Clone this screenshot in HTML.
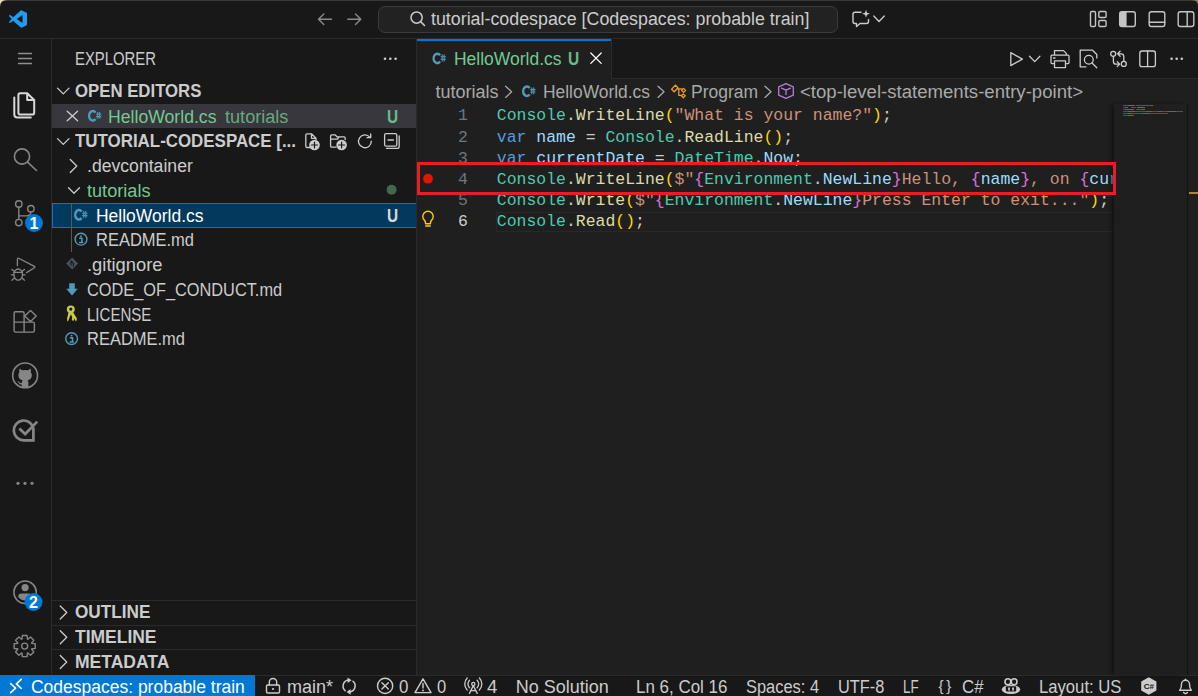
<!DOCTYPE html>
<html><head><meta charset="utf-8"><style>
html,body{margin:0;padding:0;}
body{width:1198px;height:696px;overflow:hidden;position:relative;background:#181818;font-family:"Liberation Sans",sans-serif;}
.t{position:absolute;white-space:pre;transform-origin:0 0;}
.r{position:absolute;}
.i{position:absolute;overflow:visible;}
.m{position:absolute;white-space:pre;font-family:"Liberation Mono",monospace;}
</style></head><body>
<div class="r" style="left:0px;top:0px;width:1198px;height:38px;background:#181818;"></div>
<div class="r" style="left:0px;top:0px;width:1198px;height:1px;background:#3a3832;"></div>
<div class="r" style="left:0px;top:38px;width:1198px;height:1px;background:#2b2b2b;"></div>
<div class="r" style="left:0px;top:39px;width:51px;height:636px;background:#181818;"></div>
<div class="r" style="left:51px;top:39px;width:1px;height:636px;background:#2b2b2b;"></div>
<div class="r" style="left:52px;top:39px;width:364px;height:636px;background:#181818;"></div>
<div class="r" style="left:416px;top:39px;width:1px;height:636px;background:#2b2b2b;"></div>
<div class="r" style="left:417px;top:39px;width:781px;height:636px;background:#1f1f1f;"></div>
<div class="r" style="left:611px;top:39px;width:587px;height:39px;background:#181818;"></div>
<div class="r" style="left:611px;top:78px;width:587px;height:1px;background:#2b2b2b;"></div>
<div class="r" style="left:611px;top:39px;width:1px;height:39px;background:#2b2b2b;"></div>
<div class="r" style="left:0px;top:674.6px;width:1198px;height:22px;background:#181818;"></div>
<div class="r" style="left:0px;top:674.6px;width:1198px;height:1px;background:#2b2b2b;"></div>
<div class="t" style="left:75.30px;top:49.76px;font-size:18px;line-height:18px;color:#cccccc;transform:scaleX(0.8262);">EXPLORER</div>
<div class="t" style="left:75.30px;top:81.76px;font-size:18px;line-height:18px;color:#cccccc;font-weight:bold;transform:scaleX(0.9315);">OPEN EDITORS</div>
<div class="r" style="left:52px;top:104px;width:364px;height:24px;background:#37373d;"></div>
<div class="t" style="left:108.00px;top:107.56px;font-size:18px;line-height:18px;color:#73c991;transform:scaleX(0.9801);">HelloWorld.cs</div>
<div class="t" style="left:225.00px;top:107.56px;font-size:18px;line-height:18px;color:#6aa780;transform:scaleX(1.0059);">tutorials</div>
<div class="t" style="left:386.50px;top:107.56px;font-size:18px;line-height:18px;color:#6db88a;font-weight:bold;transform:scaleX(0.8539);">U</div>
<div class="t" style="left:75.00px;top:131.76px;font-size:18px;line-height:18px;color:#cccccc;font-weight:bold;transform:scaleX(0.9391);">TUTORIAL-CODESPACE [...</div>
<div class="t" style="left:86.50px;top:157.01px;font-size:18px;line-height:18px;color:#cccccc;transform:scaleX(0.9790);">.devcontainer</div>
<div class="t" style="left:86.50px;top:181.76px;font-size:18px;line-height:18px;color:#73c991;transform:scaleX(1.0075);">tutorials</div>
<div class="r" style="left:52px;top:203px;width:364px;height:24.75px;background:#04395e;box-sizing:border-box;border:1px solid #0078d4;border-right:none;"></div>
<div class="t" style="left:96.00px;top:206.51px;font-size:18px;line-height:18px;color:#ffffff;transform:scaleX(0.9711);">HelloWorld.cs</div>
<div class="t" style="left:386.50px;top:206.51px;font-size:18px;line-height:18px;color:#d8d8d8;font-weight:bold;transform:scaleX(0.8539);">U</div>
<div class="t" style="left:96.00px;top:231.26px;font-size:18px;line-height:18px;color:#cccccc;transform:scaleX(0.9157);">README.md</div>
<div class="t" style="left:86.50px;top:256.01px;font-size:18px;line-height:18px;color:#cccccc;transform:scaleX(1.0196);">.gitignore</div>
<div class="t" style="left:86.50px;top:280.76px;font-size:18px;line-height:18px;color:#cccccc;transform:scaleX(0.9073);">CODE_OF_CONDUCT.md</div>
<div class="t" style="left:86.90px;top:305.51px;font-size:18px;line-height:18px;color:#cccccc;transform:scaleX(0.8348);">LICENSE</div>
<div class="t" style="left:86.50px;top:330.26px;font-size:18px;line-height:18px;color:#cccccc;transform:scaleX(0.9157);">README.md</div>
<div class="r" style="left:52px;top:600px;width:364px;height:1px;background:#2b2b2b;"></div>
<div class="r" style="left:52px;top:624.7px;width:364px;height:1px;background:#2b2b2b;"></div>
<div class="r" style="left:52px;top:649.4px;width:364px;height:1px;background:#2b2b2b;"></div>
<div class="t" style="left:74.80px;top:603.36px;font-size:18px;line-height:18px;color:#cccccc;font-weight:bold;transform:scaleX(0.9545);">OUTLINE</div>
<div class="t" style="left:74.80px;top:628.36px;font-size:18px;line-height:18px;color:#cccccc;font-weight:bold;transform:scaleX(0.9703);">TIMELINE</div>
<div class="t" style="left:74.80px;top:653.16px;font-size:18px;line-height:18px;color:#cccccc;font-weight:bold;transform:scaleX(0.9734);">METADATA</div>
<div class="r" style="left:378px;top:6px;width:460px;height:26.5px;background:#222222;box-sizing:border-box;border:1px solid #3b3b3b;border-radius:7px;"></div>
<div class="t" style="left:430.60px;top:10.36px;font-size:18px;line-height:18px;color:#cccccc;transform:scaleX(0.9900);">tutorial-codespace [Codespaces: probable train]</div>
<div class="r" style="left:417px;top:39px;width:194px;height:2px;background:#0078d4;"></div>
<div class="t" style="left:453.50px;top:50.16px;font-size:18px;line-height:18px;color:#73c991;transform:scaleX(0.9711);">HelloWorld.cs</div>
<div class="t" style="left:567.80px;top:50.16px;font-size:18px;line-height:18px;color:#6db88a;font-weight:bold;transform:scaleX(0.8616);">U</div>
<div class="t" style="left:435.40px;top:82.86px;font-size:18px;line-height:18px;color:#a9a9a9;">tutorials</div>
<div class="t" style="left:543.00px;top:82.86px;font-size:18px;line-height:18px;color:#a9a9a9;transform:scaleX(0.9666);">HelloWorld.cs</div>
<div class="t" style="left:691.00px;top:82.86px;font-size:18px;line-height:18px;color:#a9a9a9;transform:scaleX(0.9707);">Program</div>
<div class="t" style="left:800.00px;top:82.86px;font-size:18px;line-height:18px;color:#a9a9a9;transform:scaleX(1.0323);">&lt;top-level-statements-entry-point&gt;</div>
<div class="r" style="left:0px;top:674.6px;width:255px;height:22px;background:#0078d4;"></div>
<div class="t" style="left:30.60px;top:677.66px;font-size:18px;line-height:18px;color:#ffffff;transform:scaleX(0.9712);">Codespaces: probable train</div>
<div class="t" style="left:287.00px;top:677.66px;font-size:18px;line-height:18px;color:#cccccc;">main*</div>
<div class="t" style="left:399.30px;top:677.66px;font-size:18px;line-height:18px;color:#cccccc;transform:scaleX(0.9390);">0</div>
<div class="t" style="left:436.80px;top:677.66px;font-size:18px;line-height:18px;color:#cccccc;transform:scaleX(0.9190);">0</div>
<div class="t" style="left:487.00px;top:677.66px;font-size:18px;line-height:18px;color:#cccccc;transform:scaleX(1.0388);">4</div>
<div class="t" style="left:515.70px;top:677.66px;font-size:18px;line-height:18px;color:#cccccc;">No Solution</div>
<div class="t" style="left:635.70px;top:677.66px;font-size:18px;line-height:18px;color:#cccccc;transform:scaleX(0.9416);">Ln 6, Col 16</div>
<div class="t" style="left:745.80px;top:677.66px;font-size:18px;line-height:18px;color:#cccccc;transform:scaleX(0.9131);">Spaces: 4</div>
<div class="t" style="left:837.70px;top:677.66px;font-size:18px;line-height:18px;color:#cccccc;transform:scaleX(0.9079);">UTF-8</div>
<div class="t" style="left:902.80px;top:677.66px;font-size:18px;line-height:18px;color:#cccccc;transform:scaleX(0.7474);">LF</div>
<div class="t" style="left:962.30px;top:677.66px;font-size:18px;line-height:18px;color:#cccccc;transform:scaleX(0.9344);">C#</div>
<div class="t" style="left:1038.60px;top:677.66px;font-size:18px;line-height:18px;color:#cccccc;transform:scaleX(0.9253);">Layout: US</div>
<div class="r" style="left:70.5px;top:203px;width:1px;height:49px;background:#585858;"></div>
<div class="r" style="left:496px;top:211.5px;width:618px;height:20.5px;background:transparent;box-sizing:border-box;border:1.5px solid #282828;"></div>
<div class="m" style="left:457.92px;top:108.36px;font-size:16.467px;line-height:16.467px;color:#6e7681">1</div>
<div class="m" style="left:457.92px;top:129.58px;font-size:16.467px;line-height:16.467px;color:#6e7681">2</div>
<div class="m" style="left:457.92px;top:150.80px;font-size:16.467px;line-height:16.467px;color:#6e7681">3</div>
<div class="m" style="left:457.92px;top:172.02px;font-size:16.467px;line-height:16.467px;color:#6e7681">4</div>
<div class="m" style="left:457.92px;top:193.24px;font-size:16.467px;line-height:16.467px;color:#6e7681">5</div>
<div class="m" style="left:457.92px;top:214.46px;font-size:16.467px;line-height:16.467px;color:#cccccc">6</div>
<div style="position:absolute;left:417px;top:104px;width:697px;height:570px;overflow:hidden"><div class="m" style="left:79.8px;top:-104px;margin-top:108.36px;font-size:16.467px;line-height:16.467px"><span style="color:#4ec9b0">Console</span><span style="color:#cccccc">.</span><span style="color:#dcdcaa">WriteLine</span><span style="color:#ffd700">(</span><span style="color:#ce9178">&quot;What is your name?&quot;</span><span style="color:#ffd700">)</span><span style="color:#cccccc">;</span></div><div class="m" style="left:79.8px;top:-104px;margin-top:129.58px;font-size:16.467px;line-height:16.467px"><span style="color:#569cd6">var</span><span style="color:#cccccc"> </span><span style="color:#9cdcfe">name</span><span style="color:#cccccc"> = </span><span style="color:#4ec9b0">Console</span><span style="color:#cccccc">.</span><span style="color:#dcdcaa">ReadLine</span><span style="color:#ffd700">()</span><span style="color:#cccccc">;</span></div><div class="m" style="left:79.8px;top:-104px;margin-top:150.80px;font-size:16.467px;line-height:16.467px"><span style="color:#569cd6">var</span><span style="color:#cccccc"> </span><span style="color:#9cdcfe">currentDate</span><span style="color:#cccccc"> = </span><span style="color:#4ec9b0">DateTime</span><span style="color:#cccccc">.</span><span style="color:#9cdcfe">Now</span><span style="color:#cccccc">;</span></div><div class="m" style="left:79.8px;top:-104px;margin-top:172.02px;font-size:16.467px;line-height:16.467px"><span style="color:#4ec9b0">Console</span><span style="color:#cccccc">.</span><span style="color:#dcdcaa">WriteLine</span><span style="color:#ffd700">(</span><span style="color:#ce9178">$&quot;</span><span style="color:#da70d6">{</span><span style="color:#4ec9b0">Environment</span><span style="color:#cccccc">.</span><span style="color:#9cdcfe">NewLine</span><span style="color:#da70d6">}</span><span style="color:#ce9178">Hello, </span><span style="color:#da70d6">{</span><span style="color:#9cdcfe">name</span><span style="color:#da70d6">}</span><span style="color:#ce9178">, on </span><span style="color:#da70d6">{</span><span style="color:#9cdcfe">currentDate</span><span style="color:#ce9178">:d</span><span style="color:#da70d6">}</span><span style="color:#ce9178"> at </span><span style="color:#da70d6">{</span><span style="color:#9cdcfe">currentDate</span><span style="color:#ce9178">:t</span><span style="color:#da70d6">}</span><span style="color:#ce9178">!&quot;</span><span style="color:#ffd700">)</span><span style="color:#cccccc">;</span></div><div class="m" style="left:79.8px;top:-104px;margin-top:193.24px;font-size:16.467px;line-height:16.467px"><span style="color:#4ec9b0">Console</span><span style="color:#cccccc">.</span><span style="color:#dcdcaa">Write</span><span style="color:#ffd700">(</span><span style="color:#ce9178">$&quot;</span><span style="color:#da70d6">{</span><span style="color:#4ec9b0">Environment</span><span style="color:#cccccc">.</span><span style="color:#9cdcfe">NewLine</span><span style="color:#da70d6">}</span><span style="color:#ce9178">Press Enter to exit...</span><span style="color:#ce9178">&quot;</span><span style="color:#ffd700">)</span><span style="color:#cccccc">;</span></div><div class="m" style="left:79.8px;top:-104px;margin-top:214.46px;font-size:16.467px;line-height:16.467px"><span style="color:#4ec9b0">Console</span><span style="color:#cccccc">.</span><span style="color:#dcdcaa">Read</span><span style="color:#ffd700">()</span><span style="color:#cccccc">;</span></div></div>
<div class="r" style="left:1114px;top:104px;width:74px;height:570.6px;background:#1f1f1f;box-shadow:-3px 0 4px -1px #101010;"></div>
<div class="r" style="left:1187px;top:104px;width:1.2px;height:570.6px;background:#131313;"></div>
<div class="r" style="left:1187px;top:104px;width:11px;height:1px;background:#131313;"></div>
<div class="r" style="left:1188.5px;top:104px;width:9.5px;height:570.6px;background:#1f1f1f;"></div>
<div class="r" style="left:1188.5px;top:192px;width:9.5px;height:2px;background:#b5822f;"></div>
<div class="r" style="left:1122.5px;top:104.5px;width:5.18px;height:1.3px;background:#4ec9b0;opacity:0.4;"></div>
<div class="r" style="left:1128.42px;top:104.5px;width:6.66px;height:1.3px;background:#dcdcaa;opacity:0.4;"></div>
<div class="r" style="left:1135.82px;top:104.5px;width:14.8px;height:1.3px;background:#ce9178;opacity:0.4;"></div>
<div class="r" style="left:1150.62px;top:104.5px;width:2.22px;height:1.3px;background:#ffd700;opacity:0.4;"></div>
<div class="r" style="left:1122.5px;top:106.5px;width:2.22px;height:1.3px;background:#569cd6;opacity:0.4;"></div>
<div class="r" style="left:1125.46px;top:106.5px;width:2.96px;height:1.3px;background:#9cdcfe;opacity:0.4;"></div>
<div class="r" style="left:1130.64px;top:106.5px;width:5.18px;height:1.3px;background:#4ec9b0;opacity:0.4;"></div>
<div class="r" style="left:1136.56px;top:106.5px;width:5.92px;height:1.3px;background:#dcdcaa;opacity:0.4;"></div>
<div class="r" style="left:1142.48px;top:106.5px;width:2.22px;height:1.3px;background:#ffd700;opacity:0.4;"></div>
<div class="r" style="left:1122.5px;top:108.5px;width:2.22px;height:1.3px;background:#569cd6;opacity:0.4;"></div>
<div class="r" style="left:1125.46px;top:108.5px;width:8.14px;height:1.3px;background:#9cdcfe;opacity:0.4;"></div>
<div class="r" style="left:1135.82px;top:108.5px;width:5.92px;height:1.3px;background:#4ec9b0;opacity:0.4;"></div>
<div class="r" style="left:1142.48px;top:108.5px;width:2.22px;height:1.3px;background:#9cdcfe;opacity:0.4;"></div>
<div class="r" style="left:1122.5px;top:110.5px;width:5.18px;height:1.3px;background:#4ec9b0;opacity:0.4;"></div>
<div class="r" style="left:1128.42px;top:110.5px;width:6.66px;height:1.3px;background:#dcdcaa;opacity:0.4;"></div>
<div class="r" style="left:1135.08px;top:110.5px;width:2.22px;height:1.3px;background:#ce9178;opacity:0.4;"></div>
<div class="r" style="left:1137.3px;top:110.5px;width:8.88px;height:1.3px;background:#4ec9b0;opacity:0.4;"></div>
<div class="r" style="left:1146.18px;top:110.5px;width:5.92px;height:1.3px;background:#9cdcfe;opacity:0.4;"></div>
<div class="r" style="left:1152.1px;top:110.5px;width:5.92px;height:1.3px;background:#ce9178;opacity:0.4;"></div>
<div class="r" style="left:1158.02px;top:110.5px;width:4.44px;height:1.3px;background:#9cdcfe;opacity:0.4;"></div>
<div class="r" style="left:1162.46px;top:110.5px;width:4.44px;height:1.3px;background:#ce9178;opacity:0.4;"></div>
<div class="r" style="left:1166.9px;top:110.5px;width:8.88px;height:1.3px;background:#9cdcfe;opacity:0.4;"></div>
<div class="r" style="left:1175.78px;top:110.5px;width:7.4px;height:1.3px;background:#ce9178;opacity:0.4;"></div>
<div class="r" style="left:1122.5px;top:112.5px;width:5.18px;height:1.3px;background:#4ec9b0;opacity:0.4;"></div>
<div class="r" style="left:1128.42px;top:112.5px;width:3.7px;height:1.3px;background:#dcdcaa;opacity:0.4;"></div>
<div class="r" style="left:1132.12px;top:112.5px;width:2.22px;height:1.3px;background:#ce9178;opacity:0.4;"></div>
<div class="r" style="left:1134.34px;top:112.5px;width:8.88px;height:1.3px;background:#4ec9b0;opacity:0.4;"></div>
<div class="r" style="left:1143.22px;top:112.5px;width:5.92px;height:1.3px;background:#9cdcfe;opacity:0.4;"></div>
<div class="r" style="left:1149.14px;top:112.5px;width:19.24px;height:1.3px;background:#ce9178;opacity:0.4;"></div>
<div class="r" style="left:1122.5px;top:114.5px;width:5.18px;height:1.3px;background:#4ec9b0;opacity:0.4;"></div>
<div class="r" style="left:1128.42px;top:114.5px;width:2.96px;height:1.3px;background:#dcdcaa;opacity:0.4;"></div>
<div class="r" style="left:1131.38px;top:114.5px;width:2.22px;height:1.3px;background:#ffd700;opacity:0.4;"></div>
<div class="r" style="left:417px;top:162px;width:699px;height:33px;background:transparent;box-sizing:border-box;border:3px solid #ec1c24;"></div>
<div class="t" style="left:938.6px;top:677.5px;font-size:15px;line-height:15px;color:#cccccc;letter-spacing:2.6px">{}</div>
<svg style="position:absolute;left:0;top:0" width="1198" height="696" viewBox="0 0 1198 696"><g transform="translate(9,10) scale(0.18)"><path fill="#1f9cf0" fill-rule="evenodd" d="M70.9 2.3 L96 14.2 C98.4 15.3 100 17.8 100 20.4 V79.6 C100 82.3 98.5 84.7 96 85.8 L70.9 97.7 C69 98.6 66.8 98.5 65 97.4 L23.4 59.6 L8.2 71.1 C6.6 72.3 4.3 72.2 2.8 70.9 L0.9 69.1 C-0.3 68 -0.3 66.1 0.9 65 L14.8 50 L0.9 35 C-0.3 33.9 -0.3 32 0.9 30.9 L2.8 29.1 C4.3 27.7 6.6 27.6 8.2 28.9 L23.4 40.4 L65 2.6 C66.8 1.5 69 1.4 70.9 2.3 Z M75 27.3 L43.4 50 L75 72.7 Z"/></g><g stroke="#8f8f8f" stroke-width="1.3" fill="none" stroke-linecap="round" stroke-linejoin="round"><path d="M18.5 53.5 H31.5 M18.5 58.5 H31.5 M18.5 63.5 H31.5"/></g><g stroke="#d7d7d7" stroke-width="2.0" fill="none" stroke-linecap="round" stroke-linejoin="round"><path d="M18.4 95 Q18.4 93.2 20.2 93.2 H27.2 L34.2 100 V112.7 Q34.2 114.5 32.4 114.5 H20.2 Q18.4 114.5 18.4 112.7 Z M27.2 93.2 V100 H34.2"/><path d="M14.3 97.5 V114.5 Q14.3 117.6 17.4 117.6 H30.8"/></g><g stroke="#868686" stroke-width="1.6" fill="none" stroke-linecap="round" stroke-linejoin="round"><circle cx="22" cy="156.5" r="7.6"/><path d="M27.6 162.2 L36.5 170.5"/></g><g stroke="#868686" stroke-width="1.4" fill="none" stroke-linecap="round" stroke-linejoin="round"><circle cx="18.8" cy="204" r="3.2"/><circle cx="30.9" cy="208.7" r="3.2"/><circle cx="18.8" cy="222.6" r="3.2"/><path d="M18.8 207.2 V219.4 M30.9 211.9 Q30.9 215.9 26 215.9 H18.8"/></g><circle cx="34" cy="223" r="9" fill="#0078d4"/><g stroke="#868686" stroke-width="1.3" fill="none" stroke-linecap="round" stroke-linejoin="round"><path d="M17.4 265.5 V259.5 Q17.4 257.6 19.2 258.5 L34.4 266.4 Q35.3 267 34.4 267.7 L26.5 272.6"/><ellipse cx="18.2" cy="274.6" rx="4.3" ry="5.6"/><path d="M13.9 272.4 H22.5 M11.9 269.4 L14 271.1 M24.5 269.4 L22.4 271.1 M11.4 274.8 H13.9 M22.5 274.8 H25 M11.9 280.2 L14.1 278.3 M24.5 280.2 L22.3 278.3"/></g><g stroke="#868686" stroke-width="1.4" fill="none" stroke-linecap="round" stroke-linejoin="round"><path d="M24.1 332.1 H15.6 Q14.1 332.1 14.1 330.6 V313.3 Q14.1 311.8 15.6 311.8 H22.6 Q24.1 311.8 24.1 313.3 V332.1 M14.1 322.1 H32.9 Q34.4 322.1 34.4 323.6 V330.6 Q34.4 332.1 32.9 332.1 H24.1" /><path d="M30.5 310.4 L36.2 316 L30.5 321.6 L24.8 316 Z" stroke-linejoin="round"/></g><g stroke="#868686" stroke-width="1.6" fill="none" stroke-linecap="round" stroke-linejoin="round"><circle cx="25.1" cy="375.4" r="12.4"/></g><path fill="#868686" d="M19.8 368.5 L22 370.3 Q25.1 369.6 28.2 370.3 L30.4 368.5 Q31.4 370.6 30.8 372.2 Q32 373.6 31.8 375.8 Q31.5 379.7 27.6 380.3 Q28.4 381.2 28.4 382.6 V387.5 Q25.1 388.2 21.8 387.5 V384.6 Q19.4 384.9 18.4 382.6 Q18 381.5 17.2 381.2 Q18.6 380.9 19.6 382.4 Q20.6 383.3 21.8 382.8 Q21.9 381 22.6 380.3 Q18.7 379.7 18.4 375.8 Q18.2 373.6 19.4 372.2 Q18.8 370.6 19.8 368.5 Z"/><path fill="none" stroke="#868686" stroke-width="2.7" stroke-linejoin="miter" d="M33.4 428.4 A9.9 9.9 0 1 0 23.6 440.3 H33.4 Z"/><path fill="none" stroke="#868686" stroke-width="2.7" d="M19.3 428.4 L25.2 434 L37.2 421.6"/><circle cx="18" cy="483.3" r="1.6" fill="#868686"/><circle cx="25" cy="483.3" r="1.6" fill="#868686"/><circle cx="32" cy="483.3" r="1.6" fill="#868686"/><g stroke="#868686" stroke-width="1.5" fill="none" stroke-linecap="round" stroke-linejoin="round"><circle cx="25.1" cy="592.3" r="11.2"/></g><circle cx="25.1" cy="587.6" r="3.6" fill="#868686"/><path fill="#868686" d="M18.2 597 Q18.2 593.6 21.4 593.6 H28.8 Q32 593.6 32 597 Q28.8 600.6 25.1 600.6 Q21.4 600.6 18.2 597 Z"/><circle cx="33.5" cy="602" r="9" fill="#0078d4"/><g stroke="#868686" stroke-width="1.4" fill="none" stroke-linecap="round" stroke-linejoin="round"><path d="M35.24 643.74 L35.24 648.46 L31.81 648.78 L31.62 649.24 L33.82 651.89 L30.49 655.22 L27.84 653.02 L27.38 653.21 L27.06 656.64 L22.34 656.64 L22.02 653.21 L21.56 653.02 L18.91 655.22 L15.58 651.89 L17.78 649.24 L17.59 648.78 L14.16 648.46 L14.16 643.74 L17.59 643.42 L17.78 642.96 L15.58 640.31 L18.91 636.98 L21.56 639.18 L22.02 638.99 L22.34 635.56 L27.06 635.56 L27.38 638.99 L27.84 639.18 L30.49 636.98 L33.82 640.31 L31.62 642.96 L31.81 643.42 Z"/><circle cx="24.7" cy="646.1" r="3"/></g><text x="34" y="229.2" font-family="Liberation Sans" font-weight="bold" font-size="16" fill="#fff" text-anchor="middle">1</text><text x="33.5" y="608.2" font-family="Liberation Sans" font-weight="bold" font-size="16" fill="#fff" text-anchor="middle">2</text><g stroke="#8a8a8a" stroke-width="1.4" fill="none" stroke-linecap="round" stroke-linejoin="round"><path d="M318.5 19.2 H331.5 M323.8 13.9 L318.5 19.2 L323.8 24.5"/></g><g stroke="#8a8a8a" stroke-width="1.4" fill="none" stroke-linecap="round" stroke-linejoin="round"><path d="M347.8 19.2 H360.8 M355.5 13.9 L360.8 19.2 L355.5 24.5"/></g><g stroke="#cccccc" stroke-width="1.5" fill="none" stroke-linecap="round" stroke-linejoin="round"><circle cx="416.6" cy="17.6" r="5.6"/><path d="M420.6 21.6 L424.5 25.5"/></g><g stroke="#cccccc" stroke-width="1.4" fill="none" stroke-linecap="round" stroke-linejoin="round"><path d="M861 12.2 H855 Q853 12.2 853 14.2 V21.5 Q853 23.5 855 23.5 H856.5 V26.5 L860 23.5 H866.5 Q868.5 23.5 868.5 21.5 V19.5"/></g><path fill="#cccccc" d="M866 9.8 L867 12.8 L870 13.8 L867 14.8 L866 17.8 L865 14.8 L862 13.8 L865 12.8 Z"/><g stroke="#cccccc" stroke-width="1.3" fill="none" stroke-linecap="round" stroke-linejoin="round"><path d="M873.8 16 L879 21.5 L884.3 16"/></g><g stroke="#c5c5c5" stroke-width="1.4" fill="none" stroke-linecap="round" stroke-linejoin="round"><rect x="1090.5" y="11.5" width="5" height="15" rx="1.3"/><rect x="1098.8" y="11.5" width="7.3" height="6" rx="1.3"/><rect x="1098.8" y="20.5" width="7.3" height="6" rx="1.3"/></g><g stroke="#c5c5c5" stroke-width="1.4" fill="none" stroke-linecap="round" stroke-linejoin="round"><rect x="1119.7" y="11.7" width="15.6" height="14.8" rx="2.2"/></g><path fill="#c5c5c5" d="M1121.9 11.7 H1126.6 V26.5 H1121.9 Q1119.7 26.5 1119.7 24.3 V13.9 Q1119.7 11.7 1121.9 11.7 Z"/><g stroke="#c5c5c5" stroke-width="1.4" fill="none" stroke-linecap="round" stroke-linejoin="round"><rect x="1149.2" y="11.7" width="15.6" height="14.8" rx="2.2"/><path d="M1149.2 22.2 H1164.8"/></g><g stroke="#c5c5c5" stroke-width="1.4" fill="none" stroke-linecap="round" stroke-linejoin="round"><rect x="1178.2" y="11.7" width="15.6" height="14.8" rx="2.2"/><path d="M1187.2 11.7 V26.5"/></g><circle cx="385" cy="58.8" r="1.3" fill="#cccccc"/><circle cx="390.3" cy="58.8" r="1.3" fill="#cccccc"/><circle cx="395.6" cy="58.8" r="1.3" fill="#cccccc"/><g stroke="#cccccc" stroke-width="1.3" fill="none" stroke-linecap="round" stroke-linejoin="round"><path d="M57.5 88.125 L63.25 93.875 L69 88.125"/></g><g stroke="#cccccc" stroke-width="1.3" fill="none" stroke-linecap="round" stroke-linejoin="round"><path d="M57.5 138.625 L63.25 144.375 L69 138.625"/></g><g stroke="#cccccc" stroke-width="1.3" fill="none" stroke-linecap="round" stroke-linejoin="round"><path d="M70.25 159.5 L76.75 166.0 L70.25 172.5"/></g><g stroke="#cccccc" stroke-width="1.3" fill="none" stroke-linecap="round" stroke-linejoin="round"><path d="M68.5 187.75 L74.0 193.25 L79.5 187.75"/></g><g stroke="#cccccc" stroke-width="1.3" fill="none" stroke-linecap="round" stroke-linejoin="round"><path d="M60.25 606.0 L66.75 612.5 L60.25 619.0"/></g><g stroke="#cccccc" stroke-width="1.3" fill="none" stroke-linecap="round" stroke-linejoin="round"><path d="M60.25 630.7 L66.75 637.2 L60.25 643.7"/></g><g stroke="#cccccc" stroke-width="1.3" fill="none" stroke-linecap="round" stroke-linejoin="round"><path d="M60.25 655.5 L66.75 662.0 L60.25 668.5"/></g><g stroke="#cccccc" stroke-width="1.3" fill="none" stroke-linecap="round" stroke-linejoin="round"><path d="M67.2 111.2 L77.6 120.8 M77.6 111.2 L67.2 120.8"/></g><circle cx="391.6" cy="189.8" r="5" fill="#73c991" fill-opacity="0.45"/><g stroke="#cccccc" stroke-width="1.3" fill="none" stroke-linecap="round" stroke-linejoin="round"><path d="M312 147.5 H307 Q305.8 147.5 305.8 146.3 V135 Q305.8 133.8 307 133.8 H311.5 L316 138.3 V139.5 M311.5 133.8 V138.3 H316"/></g><circle cx="314.5" cy="145" r="5.3" fill="#cccccc"/><g stroke="#181818" stroke-width="1.2" fill="none" stroke-linecap="round" stroke-linejoin="round"><path d="M314.5 142 V148 M311.5 145 H317.5"/></g><g stroke="#cccccc" stroke-width="1.3" fill="none" stroke-linecap="round" stroke-linejoin="round"><path d="M336 147.2 H331.8 Q330.6 147.2 330.6 146 V136 Q330.6 134.8 331.8 134.8 H335 L337 136.8 H344 Q345.2 136.8 345.2 138 V139.5 M330.6 139.2 H337.5 L339 136.8"/></g><circle cx="341.6" cy="145" r="5.3" fill="#cccccc"/><g stroke="#181818" stroke-width="1.2" fill="none" stroke-linecap="round" stroke-linejoin="round"><path d="M341.6 142 V148 M338.6 145 H344.6"/></g><g stroke="#cccccc" stroke-width="1.3" fill="none" stroke-linecap="round" stroke-linejoin="round"><path d="M369.8 137.2 A6.4 6.4 0 1 0 371.3 141.2"/><path d="M370.7 134 V137.7 H367"/></g><g stroke="#cccccc" stroke-width="1.3" fill="none" stroke-linecap="round" stroke-linejoin="round"><rect x="384.6" y="133.6" width="12.2" height="12.6" rx="1.5"/><path d="M388 140 H393.4 M386.5 148.4 H397 Q399.2 148.4 399.2 146.2 V136"/></g><path d="M95.51 112.62 A3.65 4.75 0 1 0 95.51 118.98" stroke="#519aba" stroke-width="2.5" fill="none"/><path d="M97.70 112.00 V118.80 M99.70 112.00 V118.80 M96.10 114.20 H101.30 M96.10 116.60 H101.30" stroke="#519aba" stroke-width="1.1" fill="none"/><path d="M81.61 211.62 A3.65 4.75 0 1 0 81.61 217.98" stroke="#519aba" stroke-width="2.5" fill="none"/><path d="M83.80 211.00 V217.80 M85.80 211.00 V217.80 M82.20 213.20 H87.40 M82.20 215.60 H87.40" stroke="#519aba" stroke-width="1.1" fill="none"/><path d="M440.01 55.22 A3.65 4.75 0 1 0 440.01 61.58" stroke="#519aba" stroke-width="2.5" fill="none"/><path d="M442.20 54.60 V61.40 M444.20 54.60 V61.40 M440.60 56.80 H445.80 M440.60 59.20 H445.80" stroke="#519aba" stroke-width="1.1" fill="none"/><path d="M529.61 88.02 A3.65 4.75 0 1 0 529.61 94.38" stroke="#519aba" stroke-width="2.5" fill="none"/><path d="M531.80 87.40 V94.20 M533.80 87.40 V94.20 M530.20 89.60 H535.40 M530.20 92.00 H535.40" stroke="#519aba" stroke-width="1.1" fill="none"/><g stroke="#519aba" stroke-width="1.4" fill="none" stroke-linecap="round" stroke-linejoin="round"><circle cx="81" cy="239.2" r="5.9"/></g><circle cx="81" cy="236.2" r="0.95" fill="#519aba"/><path d="M79.2 238.29999999999998 H81.9 V242.39999999999998 M79 242.6 H83.2" stroke="#519aba" stroke-width="1.5" fill="none"/><g stroke="#519aba" stroke-width="1.4" fill="none" stroke-linecap="round" stroke-linejoin="round"><circle cx="71.6" cy="338.6" r="5.9"/></g><circle cx="71.6" cy="335.6" r="0.95" fill="#519aba"/><path d="M69.8 337.70000000000005 H72.5 V341.8 M69.6 342.0 H73.8" stroke="#519aba" stroke-width="1.5" fill="none"/><path fill="#41535b" d="M72.1 257.6 L78.1 263.6 L72.1 269.6 L66.1 263.6 Z"/><path stroke="#181818" stroke-width="1.1" fill="none" d="M71 261 L73.4 263.4 V266.5 M71 261 V265.8"/><path fill="#519aba" d="M69.2 283.3 H74.8 V288.8 H77.8 L72 295.4 L66.2 288.8 H69.2 Z"/><path fill="#cbcb41" d="M70.8 305.5 Q74.8 305.5 74.8 309.3 Q74.8 311.5 73.2 312.5 L76.8 318.2 Q77.4 320.2 75.8 321.4 L74.4 318.5 L73.2 321.2 L71.8 319.8 L72.2 317.2 L71 314.5 Q69.8 316 69.4 318 L68 321.6 Q66.6 320.8 67.1 318.8 L68.4 312.6 Q66.8 311.5 66.8 309.3 Q66.8 305.5 70.8 305.5 Z M70.8 307.4 Q69.2 307.4 69.2 309.1 Q69.2 310.7 70.8 310.7 Q72.4 310.7 72.4 309.1 Q72.4 307.4 70.8 307.4 Z"/><g stroke="#ffffff" stroke-width="1.25" fill="none" stroke-linecap="round" stroke-linejoin="round"><path d="M590.8 53 L601.2 63.4 M601.2 53 L590.8 63.4"/></g><g stroke="#cccccc" stroke-width="1.3" fill="none" stroke-linecap="round" stroke-linejoin="round"><path d="M1010.8 52.6 V65.6 L1022.4 59.1 Z"/></g><g stroke="#cccccc" stroke-width="1.3" fill="none" stroke-linecap="round" stroke-linejoin="round"><path d="M1029.5 56.2 L1034.7 61.6 L1039.9 56.2"/></g><g stroke="#cccccc" stroke-width="1.3" fill="none" stroke-linecap="round" stroke-linejoin="round"><path d="M1054.5 55.2 V50.6 H1063.5 L1066.3 53.4 V55.2 M1054.5 63.6 H1052 Q1051 63.6 1051 62.6 V56.2 Q1051 55.2 1052 55.2 H1068 Q1069 55.2 1069 56.2 V62.6 Q1069 63.6 1068 63.6 H1065.5 M1054.5 60.8 H1065.5 V67.6 H1054.5 Z"/><path d="M1053.5 58 H1055"/></g><g stroke="#cccccc" stroke-width="1.3" fill="none" stroke-linecap="round" stroke-linejoin="round"><path d="M1086 66.8 H1080.2 V50.2 H1092.5 L1096.8 54.5 V58"/><circle cx="1088.8" cy="59.8" r="4.4"/><path d="M1092 63 L1096.8 67.8"/></g><g stroke="#cccccc" stroke-width="1.3" fill="none" stroke-linecap="round" stroke-linejoin="round"><circle cx="1113.2" cy="53.8" r="2.5"/><circle cx="1123.8" cy="63.9" r="2.5"/><path d="M1113.4 56.3 V61.4 Q1113.4 64.1 1116.1 64.1 H1119.6 M1117.2 61.6 L1119.7 64.1 L1117.2 66.6 M1123.8 61.4 V56.5 Q1123.8 53.8 1121.1 53.8 H1117.6 M1120.1 51.3 L1117.6 53.8 L1120.1 56.3"/></g><g stroke="#cccccc" stroke-width="1.3" fill="none" stroke-linecap="round" stroke-linejoin="round"><rect x="1139.8" y="51" width="15.6" height="15.6" rx="2.2"/><path d="M1147.6 51 V66.6"/></g><circle cx="1171.6" cy="58.8" r="1.3" fill="#cccccc"/><circle cx="1176.7" cy="58.8" r="1.3" fill="#cccccc"/><circle cx="1181.8" cy="58.8" r="1.3" fill="#cccccc"/><g stroke="#a9a9a9" stroke-width="1.3" fill="none" stroke-linecap="round" stroke-linejoin="round"><path d="M505.6 86.2 L511.6 91.8 L505.6 97.4"/></g><g stroke="#a9a9a9" stroke-width="1.3" fill="none" stroke-linecap="round" stroke-linejoin="round"><path d="M658 86.2 L664 91.8 L658 97.4"/></g><g stroke="#a9a9a9" stroke-width="1.3" fill="none" stroke-linecap="round" stroke-linejoin="round"><path d="M765 86.2 L771 91.8 L765 97.4"/></g><g stroke="#ee9d28" stroke-width="1.3" fill="none" stroke-linecap="round" stroke-linejoin="round"><path d="M671.6 89.2 L675.4 85.1 L678 87.7 L674.2 91.8 Z M681.6 90.4 L683.6 88.4 L685.6 90.4 L683.6 92.4 Z M681.4 95.8 L683.3 93.9 L685.2 95.8 L683.3 97.7 Z M677 88.9 H681.8 M678.8 89.2 V95.3 H681.6"/></g><g stroke="#b180d7" stroke-width="1.3" fill="none" stroke-linecap="round" stroke-linejoin="round"><path d="M786 83.7 L793.3 86.8 V95.2 L786 98.3 L778.7 95.2 V86.8 Z M781.6 88.2 L786 90.2 L790.4 88.2 M786 90.2 V94.6"/></g><circle cx="428" cy="178.7" r="4.9" fill="#e51400"/><g stroke="#ffcc00" stroke-width="1.4" fill="none" stroke-linecap="round" stroke-linejoin="round"><path d="M425.6 223.8 Q425.6 221.4 424.3 220 Q422.8 218.4 422.8 216.4 A5.2 5.2 0 0 1 433.2 216.4 Q433.2 218.4 431.7 220 Q430.4 221.4 430.4 223.8 Z M425.8 226 H430.2"/></g><g stroke="#ffffff" stroke-width="1.6" fill="none" stroke-linecap="round" stroke-linejoin="round"><path d="M10.6 683.6 L15.6 688.1 L10.6 692.6 M21.3 679.3 L16.3 683.8 L21.3 688.3"/></g><g stroke="#cccccc" stroke-width="1.4" fill="none" stroke-linecap="round" stroke-linejoin="round"><rect x="266.5" y="685" width="13" height="8" rx="1.2"/><path d="M269.3 685 V682.2 A3.7 3.7 0 0 1 276.7 682.2 V685"/></g><circle cx="273" cy="689" r="1.1" fill="#cccccc"/><g stroke="#cccccc" stroke-width="1.5" fill="none" stroke-linecap="round" stroke-linejoin="round"><path d="M348.6 680.1 A6.1 6.1 0 0 0 345.2 690.8 M353 681.2 A6.1 6.1 0 0 1 349.6 691.9"/></g><path fill="#cccccc" d="M347.6 677.4 L351.6 680.2 L347.6 683 Z M350.6 689.1 L346.6 691.9 L350.6 694.7 Z"/><g stroke="#cccccc" stroke-width="1.4" fill="none" stroke-linecap="round" stroke-linejoin="round"><circle cx="385.1" cy="685.9" r="7.6"/><path d="M381.9 682.7 L388.3 689.1 M388.3 682.7 L381.9 689.1"/></g><g stroke="#cccccc" stroke-width="1.4" fill="none" stroke-linecap="round" stroke-linejoin="round"><path d="M423 678.8 L431 692.6 H415 Z M423 683.5 V688"/></g><circle cx="423" cy="690.4" r="0.9" fill="#cccccc"/><g stroke="#cccccc" stroke-width="1.3" fill="none" stroke-linecap="round" stroke-linejoin="round"><circle cx="473.3" cy="684" r="1.6"/><path d="M473.3 685.6 L469.4 693.4 M473.3 685.6 L477.2 693.4 M470.6 690.6 H476 M469.5 680.2 A5.4 5.4 0 0 0 469.5 687.8 M477.1 680.2 A5.4 5.4 0 0 1 477.1 687.8 M467.2 678 A8.6 8.6 0 0 0 467.2 690 M479.4 678 A8.6 8.6 0 0 1 479.4 690"/></g><ellipse cx="1011" cy="689.5" rx="9.2" ry="4.6" fill="#cccccc"/><rect x="1005.8" y="686.2" width="10.4" height="5.4" rx="1" fill="#181818"/><rect x="1008.2" y="687.3" width="1.7" height="3.4" rx="0.85" fill="#cccccc"/><rect x="1012.2" y="687.3" width="1.7" height="3.4" rx="0.85" fill="#cccccc"/><g stroke="#cccccc" stroke-width="1.6" fill="none" stroke-linecap="round" stroke-linejoin="round"><ellipse cx="1007.9" cy="681.8" rx="2.9" ry="3"/><ellipse cx="1014.1" cy="681.8" rx="2.9" ry="3"/></g><path fill="#cccccc" d="M1148.8 677.2 L1156.4 681.6 V690.4 L1148.8 694.8 L1141.2 690.4 V681.6 Z"/><text x="1148.8" y="689.4" font-family="Liberation Sans" font-weight="bold" font-size="8" fill="#181818" text-anchor="middle">C#</text><g stroke="#cccccc" stroke-width="1.4" fill="none" stroke-linecap="round" stroke-linejoin="round"><path d="M1179.6 690.2 H1191.4 Q1189.6 688.4 1189.6 685.6 V684.4 A4.1 4.1 0 0 0 1181.4 684.4 V685.6 Q1181.4 688.4 1179.6 690.2 Z M1183.6 692.6 Q1185.5 694.6 1187.4 692.6"/><path d="M1185.5 679.2 V680.4"/></g><path d="M0 0 H7 Q0 0 0 7 Z" fill="#e6dab8"/><path d="M1198 0 H1192 Q1198 0 1198 6 Z" fill="#8a8270"/></svg>

</body></html>
